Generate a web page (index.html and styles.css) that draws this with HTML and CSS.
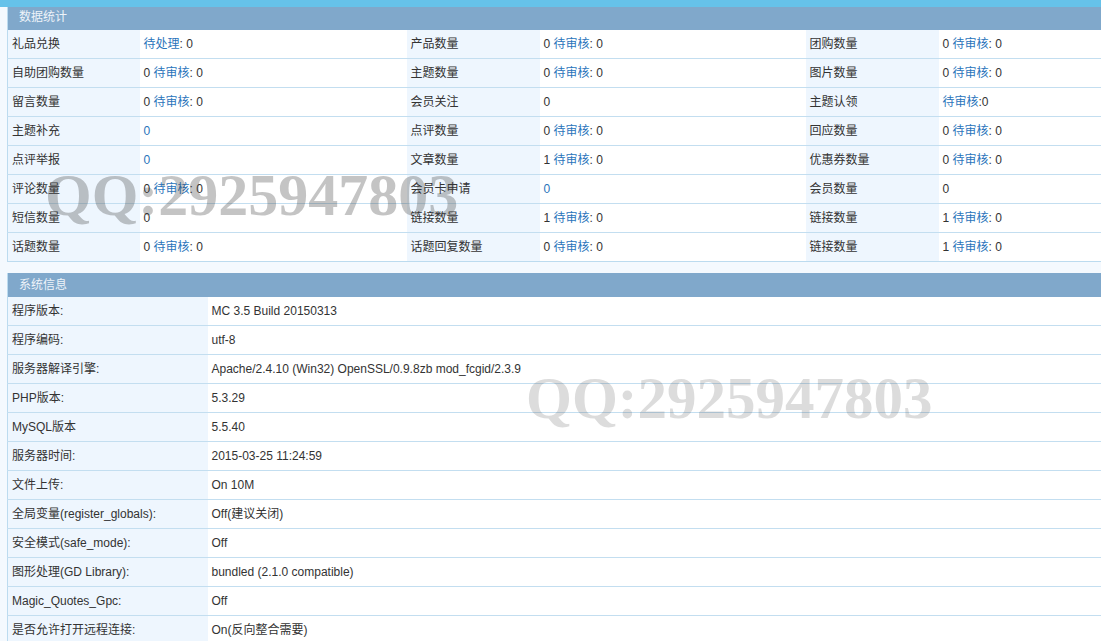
FILE: index.html
```html
<!DOCTYPE html>
<html lang="zh">
<head>
<meta charset="utf-8">
<title>数据统计</title>
<link rel="stylesheet" href="styles.css">
</head>
<body>
<div class="topbar"></div>
<div class="page">
  <table class="grid stats">
    <colgroup>
      <col class="c-l1"><col class="c-v1"><col class="c-l2"><col class="c-v2"><col class="c-l3"><col class="c-v3">
    </colgroup>
    <tr class="head"><th colspan="6">数据统计</th></tr>
    <tr><td class="lab">礼品兑换</td><td><a>待处理</a>: 0</td><td class="lab">产品数量</td><td>0 <a>待审核</a>: 0</td><td class="lab">团购数量</td><td>0 <a>待审核</a>: 0</td></tr>
    <tr><td class="lab">自助团购数量</td><td>0 <a>待审核</a>: 0</td><td class="lab">主题数量</td><td>0 <a>待审核</a>: 0</td><td class="lab">图片数量</td><td>0 <a>待审核</a>: 0</td></tr>
    <tr><td class="lab">留言数量</td><td>0 <a>待审核</a>: 0</td><td class="lab">会员关注</td><td>0</td><td class="lab">主题认领</td><td><a>待审核</a>:0</td></tr>
    <tr><td class="lab">主题补充</td><td><a>0</a></td><td class="lab">点评数量</td><td>0 <a>待审核</a>: 0</td><td class="lab">回应数量</td><td>0 <a>待审核</a>: 0</td></tr>
    <tr><td class="lab">点评举报</td><td><a>0</a></td><td class="lab">文章数量</td><td>1 <a>待审核</a>: 0</td><td class="lab">优惠券数量</td><td>0 <a>待审核</a>: 0</td></tr>
    <tr><td class="lab">评论数量</td><td>0 <a>待审核</a>: 0</td><td class="lab">会员卡申请</td><td><a>0</a></td><td class="lab">会员数量</td><td>0</td></tr>
    <tr><td class="lab">短信数量</td><td>0</td><td class="lab">链接数量</td><td>1 <a>待审核</a>: 0</td><td class="lab">链接数量</td><td>1 <a>待审核</a>: 0</td></tr>
    <tr><td class="lab">话题数量</td><td>0 <a>待审核</a>: 0</td><td class="lab">话题回复数量</td><td>0 <a>待审核</a>: 0</td><td class="lab">链接数量</td><td>1 <a>待审核</a>: 0</td></tr>
  </table>

  <table class="grid sys">
    <colgroup><col class="c-sl"><col class="c-sv"></colgroup>
    <tr class="head"><th colspan="2">系统信息</th></tr>
    <tr><td class="lab">程序版本:</td><td>MC 3.5 Build 20150313</td></tr>
    <tr><td class="lab">程序编码:</td><td>utf-8</td></tr>
    <tr><td class="lab">服务器解译引擎:</td><td>Apache/2.4.10 (Win32) OpenSSL/0.9.8zb mod_fcgid/2.3.9</td></tr>
    <tr><td class="lab">PHP版本:</td><td>5.3.29</td></tr>
    <tr><td class="lab">MySQL版本</td><td>5.5.40</td></tr>
    <tr><td class="lab">服务器时间:</td><td>2015-03-25 11:24:59</td></tr>
    <tr><td class="lab">文件上传:</td><td>On 10M</td></tr>
    <tr><td class="lab">全局变量(register_globals):</td><td>Off(建议关闭)</td></tr>
    <tr><td class="lab">安全模式(safe_mode):</td><td>Off</td></tr>
    <tr><td class="lab">图形处理(GD Library):</td><td>bundled (2.1.0 compatible)</td></tr>
    <tr><td class="lab">Magic_Quotes_Gpc:</td><td>Off</td></tr>
    <tr><td class="lab">是否允许打开远程连接:</td><td>On(反向整合需要)</td></tr>
  </table>

  <div class="mark mark-1">QQ:2925947803</div>
  <div class="mark mark-2">QQ:2925947803</div>
</div>
</body>
</html>
```

FILE: styles.css
```css
html, body {
  margin: 0;
  padding: 0;
  overflow: hidden;
}
body {
  background: #f4f9fe;
  font-family: "Liberation Sans", Arial, "Noto Sans CJK SC", sans-serif;
  font-size: 12px;
  color: #333;
}
.topbar {
  height: 7px;
  background: #66c2ea;
}
.page {
  position: relative;
  padding-left: 7px;
}
.grid {
  border-collapse: collapse;
  table-layout: fixed;
  width: 1210px;
  border: 1px solid #bcdbef;
  border-top: none;
  background: #fff;
}
.grid th {
  background: #80a8cb;
  color: #eef3f9;
  font-weight: normal;
  text-align: left;
  height: 23px;
  padding: 0 0 0 11px;
  line-height: 20px;
  vertical-align: top;
}
.grid td {
  height: 28px;
  padding: 0 0 0 4px;
  border-bottom: 1px solid #c3def0;
  white-space: nowrap;
  vertical-align: middle;
  line-height: 16px;
}
.grid tr:last-child td {
  border-bottom: none;
}
.grid td.lab {
  background: #eef6fe;
}
.grid a {
  color: #2a74bb;
  text-decoration: none;
}
.c-l1 { width: 132px; }
.c-v1 { width: 267px; }
.c-l2 { width: 133px; }
.c-v2 { width: 266px; }
.c-l3 { width: 133px; }
.c-v3 { width: 279px; }

.sys {
  margin-top: 11px;
}
.sys th {
  height: 24px;
  line-height: 24px;
  vertical-align: middle;
}
.c-sl { width: 200px; }
.c-sv { width: 1010px; }

.mark {
  position: absolute;
  font-family: "Liberation Serif", "Times New Roman", serif;
  font-weight: bold;
  line-height: 1;
  white-space: nowrap;
  pointer-events: none;
}
.mark-1 {
  left: 45px;
  top: 158px;
  font-size: 60px;
  color: rgba(60, 60, 60, 0.3);
}
.mark-2 {
  left: 526px;
  top: 362px;
  font-size: 59px;
  color: rgba(80, 80, 80, 0.2);
}
```
